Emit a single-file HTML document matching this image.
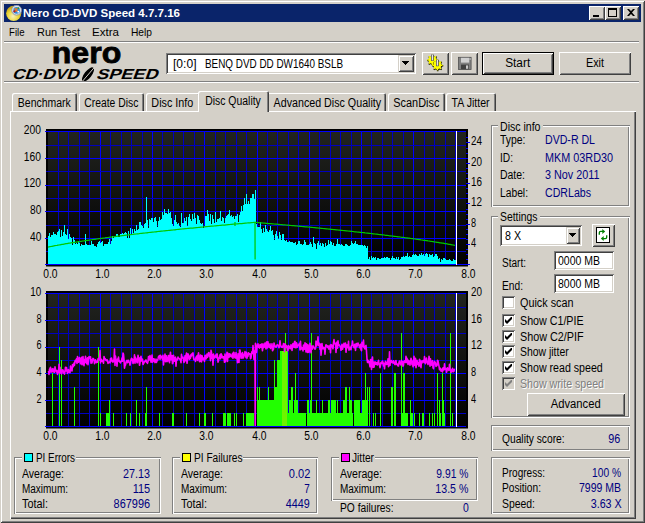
<!DOCTYPE html>
<html><head><meta charset="utf-8"><title>Nero CD-DVD Speed 4.7.7.16</title>
<style>
html,body{margin:0;padding:0;background:#d4d0c8;}
body{width:645px;height:523px;position:relative;overflow:hidden;font-family:"Liberation Sans",sans-serif;}
div,svg,span.t{position:absolute;}
span.t{white-space:pre;line-height:16px;}
</style></head><body>
<div style="left:0px;top:0px;width:645px;height:523px;background:#d4d0c8;box-shadow:inset 1px 1px 0 #d4d0c8, inset -1px -1px 0 #404040, inset 2px 2px 0 #fff, inset -2px -2px 0 #808080;"></div>
<div style="left:4px;top:4px;width:637px;height:18px;background:#0a246a"></div>
<svg style="left:6px;top:5px" width="16" height="16" viewBox="0 0 16 16">
<defs><radialGradient id="gd" cx="0.45" cy="0.7" r="0.6"><stop offset="0" stop-color="#f6f0c0"/><stop offset="0.6" stop-color="#ecd838"/><stop offset="1" stop-color="#c8a818"/></radialGradient></defs>
<circle cx="7.7" cy="8.3" r="7.6" fill="url(#gd)"/>
<circle cx="10.6" cy="5.2" r="4.9" fill="#dfe3ec" stroke="#8c94a8" stroke-width="0.9"/>
<circle cx="10.6" cy="5.4" r="3.3" fill="#2a8fe0"/>
<path d="M8.6 3.2L12 7M11.6 3L9 6.6" stroke="#f07820" stroke-width="1.3"/><circle cx="8.4" cy="6.4" r="1.1" fill="#c01818"/><circle cx="12.4" cy="3.2" r="0.9" fill="#28a038"/><circle cx="12.3" cy="6.7" r="0.9" fill="#fff"/>
</svg>
<span class="t" style="left:23.00px;top:5.02px;font-size:11.5px;font-weight:bold;color:#fff;transform:scaleX(1.0026);transform-origin:0 0">Nero CD-DVD Speed 4.7.7.16</span>
<div style="left:589px;top:6px;width:16px;height:14px;background:#d4d0c8;box-shadow:inset 1px 1px 0 #fff, inset -1px -1px 0 #404040, inset 2px 2px 0 #d4d0c8, inset -2px -2px 0 #808080;"><div style="left:4px;top:9px;width:6px;height:2px;background:#000"></div></div>
<div style="left:605px;top:6px;width:16px;height:14px;background:#d4d0c8;box-shadow:inset 1px 1px 0 #fff, inset -1px -1px 0 #404040, inset 2px 2px 0 #d4d0c8, inset -2px -2px 0 #808080;"><div style="left:3px;top:2px;width:9px;height:9px;box-sizing:border-box;border:1px solid #000;border-top-width:2px"></div></div>
<div style="left:623px;top:6px;width:16px;height:14px;background:#d4d0c8;box-shadow:inset 1px 1px 0 #fff, inset -1px -1px 0 #404040, inset 2px 2px 0 #d4d0c8, inset -2px -2px 0 #808080;"><svg style="left:4px;top:3px" width="8" height="7" viewBox="0 0 8 7"><path d="M0 0h2l2 2l2-2h2l-3 3.5l3 3.5h-2l-2-2l-2 2h-2l3-3.5z" fill="#000"/></svg></div>
<span class="t" style="left:9.00px;top:24.02px;font-size:11.5px;color:#000;transform:scaleX(0.8364);transform-origin:0 0">File</span>
<span class="t" style="left:37.00px;top:24.02px;font-size:11.5px;color:#000;transform:scaleX(0.9516);transform-origin:0 0">Run Test</span>
<span class="t" style="left:92.00px;top:24.02px;font-size:11.5px;color:#000;transform:scaleX(1.0058);transform-origin:0 0">Extra</span>
<span class="t" style="left:131.00px;top:24.02px;font-size:11.5px;color:#000;transform:scaleX(0.8877);transform-origin:0 0">Help</span>
<div style="left:4px;top:41px;width:635px;height:1px;background:#808080"></div><div style="left:4px;top:42px;width:635px;height:1px;background:#fff"></div>
<svg style="left:10px;top:43px" width="152" height="40" viewBox="0 0 152 40">
<text x="76.5" y="19.8" text-anchor="middle" font-family="Liberation Sans" font-weight="bold" font-size="30" textLength="69.5" lengthAdjust="spacingAndGlyphs" fill="#000" stroke="#000" stroke-width="0.8">nero</text>
<g transform="skewX(-20)"><text x="15" y="36.3" font-family="Liberation Sans" font-weight="bold" font-size="14.5" textLength="66.5" lengthAdjust="spacingAndGlyphs" fill="#000">CD·DVD</text>
<text x="99" y="36.3" font-family="Liberation Sans" font-weight="bold" font-size="14.5" textLength="61.5" lengthAdjust="spacingAndGlyphs" fill="#000">SPEED</text></g>
<ellipse cx="78" cy="31.5" rx="3.6" ry="8.6" transform="rotate(38 78 31.5)" fill="#000"/>
<path d="M72 38.8L84 24.8" stroke="#d4d0c8" stroke-width="1"/>
</svg>
<div style="left:166px;top:53px;width:250px;height:21px;background:#fff;box-shadow:inset 1px 1px 0 #808080, inset -1px -1px 0 #fff, inset 2px 2px 0 #404040, inset -2px -2px 0 #d4d0c8;"></div>
<span class="t" style="left:172.60px;top:56.00px;font-size:12px;color:#000;transform:scaleX(1.0060);transform-origin:0 0">[0:0]</span>
<span class="t" style="left:205.00px;top:56.00px;font-size:12px;color:#000;transform:scaleX(0.8244);transform-origin:0 0">BENQ DVD DD DW1640 BSLB</span>
<div style="left:398px;top:55px;width:16px;height:17px;background:#d4d0c8;box-shadow:inset 1px 1px 0 #d4d0c8, inset -1px -1px 0 #404040, inset 2px 2px 0 #fff, inset -2px -2px 0 #808080;"><svg style="left:4px;top:6px" width="7" height="4" viewBox="0 0 7 4" shape-rendering="crispEdges"><path d="M0 0h7l-3.5 4z" fill="#000"/></svg></div>
<div style="left:422px;top:52px;width:27px;height:23px;background:#d4d0c8;box-shadow:inset 1px 1px 0 #fff, inset -1px -1px 0 #404040, inset 2px 2px 0 #d4d0c8, inset -2px -2px 0 #808080;"><svg style="left:0;top:0" width="27" height="23" viewBox="0 0 27 23"><g transform="translate(10.4 7.9)"><path d="M3.90 -0.87 L5.55 -0.75 L5.55 0.75 L3.90 0.87 L3.38 2.14 L4.45 3.40 L3.40 4.45 L2.14 3.38 L0.87 3.90 L0.75 5.55 L-0.75 5.55 L-0.87 3.90 L-2.14 3.38 L-3.40 4.45 L-4.45 3.40 L-3.38 2.14 L-3.90 0.87 L-5.55 0.75 L-5.55 -0.75 L-3.90 -0.87 L-3.38 -2.14 L-4.45 -3.40 L-3.40 -4.45 L-2.14 -3.38 L-0.87 -3.90 L-0.75 -5.55 L0.75 -5.55 L0.87 -3.90 L2.14 -3.38 L3.40 -4.45 L4.45 -3.40 L3.38 -2.14Z" fill="#202000" transform="translate(0.3 0.6)"/><circle cx="0.3" cy="0.6" r="4.3" fill="#202000"/>
<path d="M3.32 -0.74 L5.05 -0.68 L5.05 0.68 L3.32 0.74 L2.87 1.82 L4.05 3.09 L3.09 4.05 L1.82 2.87 L0.74 3.32 L0.68 5.05 L-0.68 5.05 L-0.74 3.32 L-1.82 2.87 L-3.09 4.05 L-4.05 3.09 L-2.87 1.82 L-3.32 0.74 L-5.05 0.68 L-5.05 -0.68 L-3.32 -0.74 L-2.87 -1.82 L-4.05 -3.09 L-3.09 -4.05 L-1.82 -2.87 L-0.74 -3.32 L-0.68 -5.05 L0.68 -5.05 L0.74 -3.32 L1.82 -2.87 L3.09 -4.05 L4.05 -3.09 L2.87 -1.82Z" fill="#ffff00"/><circle r="3.7" fill="#ffff00"/>
<rect x="-1.4" y="-5.4" width="2.8" height="6.4" fill="#585858"/><rect x="-0.6" y="-5.2" width="1.2" height="5.6" fill="#e8e8e8"/></g><g transform="translate(15.4 13.2)"><path d="M3.90 -0.87 L5.55 -0.75 L5.55 0.75 L3.90 0.87 L3.38 2.14 L4.45 3.40 L3.40 4.45 L2.14 3.38 L0.87 3.90 L0.75 5.55 L-0.75 5.55 L-0.87 3.90 L-2.14 3.38 L-3.40 4.45 L-4.45 3.40 L-3.38 2.14 L-3.90 0.87 L-5.55 0.75 L-5.55 -0.75 L-3.90 -0.87 L-3.38 -2.14 L-4.45 -3.40 L-3.40 -4.45 L-2.14 -3.38 L-0.87 -3.90 L-0.75 -5.55 L0.75 -5.55 L0.87 -3.90 L2.14 -3.38 L3.40 -4.45 L4.45 -3.40 L3.38 -2.14Z" fill="#202000" transform="translate(0.3 0.6)"/><circle cx="0.3" cy="0.6" r="4.3" fill="#202000"/>
<path d="M3.32 -0.74 L5.05 -0.68 L5.05 0.68 L3.32 0.74 L2.87 1.82 L4.05 3.09 L3.09 4.05 L1.82 2.87 L0.74 3.32 L0.68 5.05 L-0.68 5.05 L-0.74 3.32 L-1.82 2.87 L-3.09 4.05 L-4.05 3.09 L-2.87 1.82 L-3.32 0.74 L-5.05 0.68 L-5.05 -0.68 L-3.32 -0.74 L-2.87 -1.82 L-4.05 -3.09 L-3.09 -4.05 L-1.82 -2.87 L-0.74 -3.32 L-0.68 -5.05 L0.68 -5.05 L0.74 -3.32 L1.82 -2.87 L3.09 -4.05 L4.05 -3.09 L2.87 -1.82Z" fill="#ffff00"/><circle r="3.7" fill="#ffff00"/>
<rect x="-1.4" y="-5.4" width="2.8" height="6.4" fill="#585858"/><rect x="-0.6" y="-5.2" width="1.2" height="5.6" fill="#e8e8e8"/></g></svg></div>
<div style="left:451px;top:52px;width:27px;height:23px;background:#d4d0c8;box-shadow:inset 1px 1px 0 #fff, inset -1px -1px 0 #404040, inset 2px 2px 0 #d4d0c8, inset -2px -2px 0 #808080;"><svg style="left:0;top:0" width="27" height="23" viewBox="0 0 27 23">
<rect x="7.5" y="5.3" width="12.6" height="12.2" fill="#808080"/><rect x="7.5" y="5.3" width="12.6" height="12.2" fill="none" stroke="#505050" stroke-width="0.8"/>
<rect x="10" y="5.8" width="8.2" height="4.8" fill="#d0d0d0"/><rect x="10" y="12.6" width="8" height="4.6" fill="#404040"/><rect x="15" y="13.4" width="2.2" height="3.4" fill="#c8c8c8"/><rect x="18.6" y="6.2" width="1" height="1.6" fill="#d0d0d0"/></svg></div>
<div style="left:482px;top:52px;width:72px;height:23px;background:#000"></div>
<div style="left:483px;top:53px;width:70px;height:21px;background:#d4d0c8;box-shadow:inset 1px 1px 0 #fff, inset -1px -1px 0 #404040, inset 2px 2px 0 #d4d0c8, inset -2px -2px 0 #808080;"></div>
<span class="t" style="left:505.33px;top:55.00px;font-size:12px;color:#000;transform:scaleX(0.9864);transform-origin:50% 0">Start</span>
<div style="left:559px;top:52px;width:72px;height:23px;background:#d4d0c8;box-shadow:inset 1px 1px 0 #fff, inset -1px -1px 0 #404040, inset 2px 2px 0 #d4d0c8, inset -2px -2px 0 #808080;"></div>
<span class="t" style="left:584.99px;top:55.00px;font-size:12px;color:#000;transform:scaleX(0.8993);transform-origin:50% 0">Exit</span>
<div style="left:4px;top:81px;width:635px;height:1px;background:#808080"></div><div style="left:4px;top:82px;width:635px;height:1px;background:#fff"></div>
<div style="left:10px;top:111px;width:626px;height:408px;background:#d4d0c8;box-shadow:inset 1px 1px 0 #fff, inset -1px -1px 0 #404040, inset -2px -2px 0 #808080;"></div>
<div style="left:12px;top:93px;width:65px;height:18px;background:#d4d0c8;border-radius:2px 2px 0 0;box-shadow:inset 1px 1px 0 #fff, inset -1px 0 0 #404040, inset -2px 0 0 #808080;"></div>
<span class="t" style="left:14.15px;top:95.00px;font-size:12px;color:#000;transform:scaleX(0.8731);transform-origin:50% 0">Benchmark</span>
<div style="left:79px;top:93px;width:65px;height:18px;background:#d4d0c8;border-radius:2px 2px 0 0;box-shadow:inset 1px 1px 0 #fff, inset -1px 0 0 #404040, inset -2px 0 0 #808080;"></div>
<span class="t" style="left:80.16px;top:95.00px;font-size:12px;color:#000;transform:scaleX(0.8614);transform-origin:50% 0">Create Disc</span>
<div style="left:146px;top:93px;width:54px;height:18px;background:#d4d0c8;border-radius:2px 2px 0 0;box-shadow:inset 1px 1px 0 #fff, inset -1px 0 0 #404040, inset -2px 0 0 #808080;"></div>
<span class="t" style="left:148.96px;top:95.00px;font-size:12px;color:#000;transform:scaleX(0.8996);transform-origin:50% 0">Disc Info</span>
<div style="left:267px;top:93px;width:119px;height:18px;background:#d4d0c8;border-radius:2px 2px 0 0;box-shadow:inset 1px 1px 0 #fff, inset -1px 0 0 #404040, inset -2px 0 0 #808080;"></div>
<span class="t" style="left:266.63px;top:95.00px;font-size:12px;color:#000;transform:scaleX(0.8912);transform-origin:50% 0">Advanced Disc Quality</span>
<div style="left:388px;top:93px;width:57px;height:18px;background:#d4d0c8;border-radius:2px 2px 0 0;box-shadow:inset 1px 1px 0 #fff, inset -1px 0 0 #404040, inset -2px 0 0 #808080;"></div>
<span class="t" style="left:390.96px;top:95.00px;font-size:12px;color:#000;transform:scaleX(0.9075);transform-origin:50% 0">ScanDisc</span>
<div style="left:446px;top:93px;width:50px;height:18px;background:#d4d0c8;border-radius:2px 2px 0 0;box-shadow:inset 1px 1px 0 #fff, inset -1px 0 0 #404040, inset -2px 0 0 #808080;"></div>
<span class="t" style="left:449.24px;top:95.00px;font-size:12px;color:#000;transform:scaleX(0.8812);transform-origin:50% 0">TA Jitter</span>
<div style="left:198px;top:91px;width:71px;height:21px;background:#d4d0c8;border-radius:2px 2px 0 0;box-shadow:inset 1px 1px 0 #fff, inset -1px 0 0 #404040, inset -2px 0 0 #808080;"></div>
<span class="t" style="left:201.39px;top:93.00px;font-size:12px;color:#000;transform:scaleX(0.8685);transform-origin:50% 0">Disc Quality</span>
<svg style="left:0;top:0" width="490" height="450" viewBox="0 0 490 450">
<rect x="46" y="129.0" width="422" height="137.5" fill="#000"/>
<rect x="48" y="131.3" width="418" height="133.2" fill="url(#gr131)"/>
<defs><linearGradient id="gr131" x1="0" y1="0" x2="0" y2="1"><stop offset="0" stop-color="#22241f"/><stop offset="1" stop-color="#000"/></linearGradient></defs>
<g shape-rendering="crispEdges">
<line x1="58.50" y1="131.3" x2="58.50" y2="264.5" stroke="#0000c0" stroke-width="1"/>
<line x1="68.50" y1="131.3" x2="68.50" y2="264.5" stroke="#0000c0" stroke-width="1"/>
<line x1="79.50" y1="131.3" x2="79.50" y2="264.5" stroke="#0000c0" stroke-width="1"/>
<line x1="89.50" y1="131.3" x2="89.50" y2="264.5" stroke="#0000c0" stroke-width="1"/>
<line x1="100.50" y1="131.3" x2="100.50" y2="264.5" stroke="#0000ff" stroke-width="1"/>
<line x1="110.50" y1="131.3" x2="110.50" y2="264.5" stroke="#0000c0" stroke-width="1"/>
<line x1="121.50" y1="131.3" x2="121.50" y2="264.5" stroke="#0000c0" stroke-width="1"/>
<line x1="131.50" y1="131.3" x2="131.50" y2="264.5" stroke="#0000c0" stroke-width="1"/>
<line x1="142.50" y1="131.3" x2="142.50" y2="264.5" stroke="#0000c0" stroke-width="1"/>
<line x1="152.50" y1="131.3" x2="152.50" y2="264.5" stroke="#0000ff" stroke-width="1"/>
<line x1="162.50" y1="131.3" x2="162.50" y2="264.5" stroke="#0000c0" stroke-width="1"/>
<line x1="173.50" y1="131.3" x2="173.50" y2="264.5" stroke="#0000c0" stroke-width="1"/>
<line x1="183.50" y1="131.3" x2="183.50" y2="264.5" stroke="#0000c0" stroke-width="1"/>
<line x1="194.50" y1="131.3" x2="194.50" y2="264.5" stroke="#0000c0" stroke-width="1"/>
<line x1="204.50" y1="131.3" x2="204.50" y2="264.5" stroke="#0000ff" stroke-width="1"/>
<line x1="215.50" y1="131.3" x2="215.50" y2="264.5" stroke="#0000c0" stroke-width="1"/>
<line x1="225.50" y1="131.3" x2="225.50" y2="264.5" stroke="#0000c0" stroke-width="1"/>
<line x1="236.50" y1="131.3" x2="236.50" y2="264.5" stroke="#0000c0" stroke-width="1"/>
<line x1="246.50" y1="131.3" x2="246.50" y2="264.5" stroke="#0000c0" stroke-width="1"/>
<line x1="257.50" y1="131.3" x2="257.50" y2="264.5" stroke="#0000ff" stroke-width="1"/>
<line x1="267.50" y1="131.3" x2="267.50" y2="264.5" stroke="#0000c0" stroke-width="1"/>
<line x1="277.50" y1="131.3" x2="277.50" y2="264.5" stroke="#0000c0" stroke-width="1"/>
<line x1="288.50" y1="131.3" x2="288.50" y2="264.5" stroke="#0000c0" stroke-width="1"/>
<line x1="298.50" y1="131.3" x2="298.50" y2="264.5" stroke="#0000c0" stroke-width="1"/>
<line x1="309.50" y1="131.3" x2="309.50" y2="264.5" stroke="#0000ff" stroke-width="1"/>
<line x1="319.50" y1="131.3" x2="319.50" y2="264.5" stroke="#0000c0" stroke-width="1"/>
<line x1="330.50" y1="131.3" x2="330.50" y2="264.5" stroke="#0000c0" stroke-width="1"/>
<line x1="340.50" y1="131.3" x2="340.50" y2="264.5" stroke="#0000c0" stroke-width="1"/>
<line x1="351.50" y1="131.3" x2="351.50" y2="264.5" stroke="#0000c0" stroke-width="1"/>
<line x1="361.50" y1="131.3" x2="361.50" y2="264.5" stroke="#0000ff" stroke-width="1"/>
<line x1="371.50" y1="131.3" x2="371.50" y2="264.5" stroke="#0000c0" stroke-width="1"/>
<line x1="382.50" y1="131.3" x2="382.50" y2="264.5" stroke="#0000c0" stroke-width="1"/>
<line x1="392.50" y1="131.3" x2="392.50" y2="264.5" stroke="#0000c0" stroke-width="1"/>
<line x1="403.50" y1="131.3" x2="403.50" y2="264.5" stroke="#0000c0" stroke-width="1"/>
<line x1="413.50" y1="131.3" x2="413.50" y2="264.5" stroke="#0000ff" stroke-width="1"/>
<line x1="424.50" y1="131.3" x2="424.50" y2="264.5" stroke="#0000c0" stroke-width="1"/>
<line x1="434.50" y1="131.3" x2="434.50" y2="264.5" stroke="#0000c0" stroke-width="1"/>
<line x1="445.50" y1="131.3" x2="445.50" y2="264.5" stroke="#0000c0" stroke-width="1"/>
<line x1="455.50" y1="131.3" x2="455.50" y2="264.5" stroke="#0000c0" stroke-width="1"/>
<line x1="44.5" y1="131.50" x2="466" y2="131.50" stroke="#0000ff" stroke-width="1"/>
<line x1="46" y1="145.50" x2="466" y2="145.50" stroke="#0000c0" stroke-width="1"/>
<line x1="44.5" y1="158.50" x2="466" y2="158.50" stroke="#0000ff" stroke-width="1"/>
<line x1="46" y1="171.50" x2="466" y2="171.50" stroke="#0000c0" stroke-width="1"/>
<line x1="44.5" y1="185.50" x2="466" y2="185.50" stroke="#0000ff" stroke-width="1"/>
<line x1="46" y1="198.50" x2="466" y2="198.50" stroke="#0000c0" stroke-width="1"/>
<line x1="44.5" y1="211.50" x2="466" y2="211.50" stroke="#0000ff" stroke-width="1"/>
<line x1="46" y1="225.50" x2="466" y2="225.50" stroke="#0000c0" stroke-width="1"/>
<line x1="44.5" y1="238.50" x2="466" y2="238.50" stroke="#0000ff" stroke-width="1"/>
<line x1="46" y1="251.50" x2="466" y2="251.50" stroke="#0000c0" stroke-width="1"/>
<line x1="44.5" y1="264.50" x2="466" y2="264.50" stroke="#0000ff" stroke-width="1"/>
</g>
<path d="M48 264.5 V236 H49 V233 H50 V237 H51 V235 H52 V235 H53 V232 H54 V234 H55 V234 H56 V235 H57 V232 H58 V231 H59 V229 H60 V237 H61 V230 H62 V236 H63 V232 H64 V225 H65 V234 H66 V235 H67 V229 H68 V239 H69 V234 H70 V237 H71 V238 H72 V245 H73 V237 H74 V240 H75 V244 H76 V243 H77 V244 H78 V241 H79 V243 H80 V246 H81 V244 H82 V245 H83 V245 H84 V245 H85 V234 H86 V244 H87 V245 H88 V245 H89 V245 H90 V245 H91 V241 H92 V244 H93 V244 H94 V246 H95 V246 H96 V247 H97 V244 H98 V242 H99 V241 H100 V243 H101 V242 H102 V241 H103 V246 H104 V244 H105 V244 H106 V244 H107 V244 H108 V242 H109 V239 H110 V244 H111 V241 H112 V236 H113 V238 H114 V236 H115 V236 H116 V234 H117 V234 H118 V237 H119 V237 H120 V234 H121 V234 H122 V233 H123 V234 H124 V233 H125 V232 H126 V233 H127 V238 H128 V231 H129 V238 H130 V228 H131 V235 H132 V229 H133 V233 H134 V229 H135 V231 H136 V225 H137 V230 H138 V229 H139 V222 H140 V222 H141 V225 H142 V226 H143 V228 H144 V224 H145 V223 H146 V197 H147 V220 H148 V228 H149 V219 H150 V220 H151 V218 H152 V218 H153 V222 H154 V218 H155 V217 H156 V221 H157 V227 H158 V221 H159 V217 H160 V220 H161 V219 H162 V212 H163 V215 H164 V209 H165 V213 H166 V213 H167 V214 H168 V209 H169 V213 H170 V212 H171 V218 H172 V224 H173 V226 H174 V220 H175 V215 H176 V222 H177 V224 H178 V223 H179 V226 H180 V227 H181 V213 H182 V223 H183 V223 H184 V218 H185 V221 H186 V217 H187 V226 H188 V217 H189 V214 H190 V219 H191 V221 H192 V214 H193 V219 H194 V213 H195 V218 H196 V224 H197 V215 H198 V216 H199 V220 H200 V223 H201 V224 H202 V223 H203 V228 H204 V226 H205 V216 H206 V216 H207 V210 H208 V214 H209 V221 H210 V214 H211 V224 H212 V215 H213 V219 H214 V223 H215 V212 H216 V222 H217 V219 H218 V219 H219 V218 H220 V211 H221 V221 H222 V217 H223 V218 H224 V223 H225 V218 H226 V216 H227 V215 H228 V214 H229 V210 H230 V216 H231 V215 H232 V217 H233 V216 H234 V219 H235 V216 H236 V216 H237 V214 H238 V222 H239 V215 H240 V212 H241 V206 H242 V211 H243 V205 H244 V198 H245 V204 H246 V194 H247 V204 H248 V201 H249 V204 H250 V198 H251 V198 H252 V194 H253 V194 H254 V199 H255 V190 H256 V224 H257 V227 H258 V227 H259 V227 H260 V222 H261 V229 H262 V233 H263 V228 H264 V232 H265 V225 H266 V229 H267 V231 H268 V232 H269 V230 H270 V226 H271 V231 H272 V230 H273 V235 H274 V240 H275 V234 H276 V231 H277 V236 H278 V239 H279 V232 H280 V235 H281 V240 H282 V234 H283 V234 H284 V240 H285 V241 H286 V240 H287 V242 H288 V242 H289 V241 H290 V242 H291 V242 H292 V242 H293 V243 H294 V243 H295 V242 H296 V245 H297 V244 H298 V241 H299 V241 H300 V244 H301 V244 H302 V245 H303 V244 H304 V240 H305 V242 H306 V245 H307 V245 H308 V245 H309 V244 H310 V242 H311 V244 H312 V247 H313 V237 H314 V243 H315 V244 H316 V249 H317 V243 H318 V241 H319 V245 H320 V243 H321 V246 H322 V243 H323 V244 H324 V247 H325 V243 H326 V246 H327 V245 H328 V240 H329 V244 H330 V241 H331 V242 H332 V245 H333 V243 H334 V246 H335 V246 H336 V244 H337 V239 H338 V244 H339 V244 H340 V245 H341 V244 H342 V245 H343 V246 H344 V246 H345 V244 H346 V244 H347 V245 H348 V246 H349 V246 H350 V245 H351 V241 H352 V243 H353 V244 H354 V243 H355 V241 H356 V244 H357 V244 H358 V245 H359 V245 H360 V245 H361 V245 H362 V245 H363 V246 H364 V245 H365 V246 H366 V248 H367 V246 H368 V259 H369 V257 H370 V260 H371 V256 H372 V258 H373 V257 H374 V258 H375 V257 H376 V260 H377 V258 H378 V258 H379 V259 H380 V259 H381 V258 H382 V258 H383 V258 H384 V257 H385 V258 H386 V257 H387 V257 H388 V258 H389 V258 H390 V260 H391 V258 H392 V256 H393 V258 H394 V258 H395 V259 H396 V257 H397 V259 H398 V257 H399 V260 H400 V259 H401 V257 H402 V257 H403 V256 H404 V257 H405 V256 H406 V256 H407 V253 H408 V257 H409 V256 H410 V257 H411 V257 H412 V255 H413 V254 H414 V255 H415 V254 H416 V255 H417 V256 H418 V256 H419 V254 H420 V255 H421 V253 H422 V255 H423 V254 H424 V256 H425 V254 H426 V253 H427 V254 H428 V257 H429 V254 H430 V255 H431 V255 H432 V254 H433 V257 H434 V256 H435 V254 H436 V254 H437 V256 H438 V259 H439 V258 H440 V262 H441 V259 H442 V260 H443 V258 H444 V258 H445 V259 H446 V260 H447 V260 H448 V260 H449 V259 H450 V260 H451 V261 H452 V261 H453 V259 H454 V260 H455 V260 H456 V264.5 Z" fill="#00ffff" shape-rendering="crispEdges"/><path d="M48.0 247.1 L49.0 246.9 L50.0 246.7 L51.0 246.5 L52.0 246.3 L53.0 246.1 L54.0 245.9 L55.0 245.7 L56.0 245.5 L57.0 245.4 L58.0 245.2 L59.0 245.0 L60.0 244.8 L61.0 244.6 L62.0 244.4 L63.0 244.3 L64.0 244.1 L65.0 243.9 L66.0 243.7 L67.0 243.6 L68.0 243.4 L69.0 243.2 L70.0 243.1 L71.0 242.9 L72.0 242.7 L73.0 242.6 L74.0 242.4 L75.0 242.3 L76.0 242.1 L77.0 241.9 L78.0 241.8 L79.0 241.6 L80.0 241.5 L81.0 241.3 L82.0 241.2 L83.0 241.0 L84.0 240.9 L85.0 240.7 L86.0 240.6 L87.0 240.4 L88.0 240.3 L89.0 240.1 L90.0 240.0 L91.0 239.8 L92.0 239.7 L93.0 239.5 L94.0 239.4 L95.0 239.3 L96.0 239.1 L97.0 239.0 L98.0 238.8 L99.0 238.7 L100.0 238.6 L101.0 238.4 L102.0 238.3 L103.0 238.1 L104.0 238.0 L105.0 237.9 L106.0 237.7 L107.0 237.6 L108.0 237.5 L109.0 237.3 L110.0 237.2 L111.0 237.1 L112.0 237.0 L113.0 236.8 L114.0 236.7 L115.0 236.6 L116.0 236.4 L117.0 236.3 L118.0 236.2 L119.0 236.1 L120.0 235.9 L121.0 235.8 L122.0 235.7 L123.0 235.6 L124.0 235.4 L125.0 235.3 L126.0 235.2 L127.0 235.1 L128.0 235.0 L129.0 234.8 L130.0 234.7 L131.0 234.6 L132.0 234.5 L133.0 234.4 L134.0 234.2 L135.0 234.1 L136.0 234.0 L137.0 233.9 L138.0 233.8 L139.0 233.7 L140.0 233.5 L141.0 233.4 L142.0 233.3 L143.0 233.2 L144.0 233.1 L145.0 233.0 L146.0 232.9 L147.0 232.8 L148.0 232.6 L149.0 232.5 L150.0 232.4 L151.0 232.3 L152.0 232.2 L153.0 232.1 L154.0 232.0 L155.0 231.9 L156.0 231.8 L157.0 231.6 L158.0 231.5 L159.0 231.4 L160.0 231.3 L161.0 231.2 L162.0 231.1 L163.0 231.0 L164.0 230.9 L165.0 230.8 L166.0 230.7 L167.0 230.6 L168.0 230.5 L169.0 230.4 L170.0 230.3 L171.0 230.2 L172.0 230.1 L173.0 230.0 L174.0 229.9 L175.0 229.8 L176.0 229.6 L177.0 229.5 L178.0 229.4 L179.0 229.3 L180.0 229.2 L181.0 229.1 L182.0 229.0 L183.0 228.9 L184.0 228.8 L185.0 228.7 L186.0 228.6 L187.0 228.5 L188.0 228.4 L189.0 228.3 L190.0 228.2 L191.0 228.1 L192.0 228.0 L193.0 228.0 L194.0 227.9 L195.0 227.8 L196.0 227.7 L197.0 227.6 L198.0 227.5 L199.0 227.4 L200.0 227.3 L201.0 227.2 L202.0 227.1 L203.0 227.0 L204.0 226.9 L205.0 226.8 L206.0 226.7 L207.0 226.6 L208.0 226.5 L209.0 226.4 L210.0 226.3 L211.0 226.2 L212.0 226.1 L213.0 226.1 L214.0 226.0 L215.0 225.9 L216.0 225.8 L217.0 225.7 L218.0 225.6 L219.0 225.5 L220.0 225.4 L221.0 225.3 L222.0 225.2 L223.0 225.1 L224.0 225.0 L225.0 225.0 L226.0 224.9 L227.0 224.8 L228.0 224.7 L229.0 224.6 L230.0 224.5 L231.0 224.4 L232.0 224.3 L233.0 224.2 L234.0 224.2 L235.0 224.1 L236.0 224.0 L237.0 223.9 L238.0 223.8 L239.0 223.7 L240.0 223.6 L241.0 223.5 L242.0 223.5 L243.0 223.4 L244.0 223.3 L245.0 223.2 L246.0 223.1 L247.0 223.0 L248.0 222.9 L249.0 222.8 L250.0 222.8 L251.0 222.7 L252.0 222.6 L253.0 222.5 L254.0 222.4 L255.0 222.4 L255.1 259.4 M255.1 222.3 L256.0 222.4 L257.0 222.5 L258.0 222.6 L259.0 222.7 L260.0 222.8 L261.0 222.9 L262.0 222.9 L263.0 223.0 L264.0 223.1 L265.0 223.2 L266.0 223.3 L267.0 223.4 L268.0 223.5 L269.0 223.5 L270.0 223.6 L271.0 223.7 L272.0 223.8 L273.0 223.9 L274.0 224.0 L275.0 224.1 L276.0 224.1 L277.0 224.2 L278.0 224.3 L279.0 224.4 L280.0 224.5 L281.0 224.6 L282.0 224.7 L283.0 224.8 L284.0 224.9 L285.0 224.9 L286.0 225.0 L287.0 225.1 L288.0 225.2 L289.0 225.3 L290.0 225.4 L291.0 225.5 L292.0 225.6 L293.0 225.7 L294.0 225.7 L295.0 225.8 L296.0 225.9 L297.0 226.0 L298.0 226.1 L299.0 226.2 L300.0 226.3 L301.0 226.4 L302.0 226.5 L303.0 226.6 L304.0 226.7 L305.0 226.8 L306.0 226.9 L307.0 226.9 L308.0 227.0 L309.0 227.1 L310.0 227.2 L311.0 227.3 L312.0 227.4 L313.0 227.5 L314.0 227.6 L315.0 227.7 L316.0 227.8 L317.0 227.9 L318.0 228.0 L319.0 228.1 L320.0 228.2 L321.0 228.3 L322.0 228.4 L323.0 228.5 L324.0 228.6 L325.0 228.7 L326.0 228.8 L327.0 228.9 L328.0 229.0 L329.0 229.1 L330.0 229.2 L331.0 229.3 L332.0 229.4 L333.0 229.5 L334.0 229.6 L335.0 229.7 L336.0 229.8 L337.0 229.9 L338.0 230.0 L339.0 230.1 L340.0 230.2 L341.0 230.3 L342.0 230.4 L343.0 230.5 L344.0 230.6 L345.0 230.7 L346.0 230.8 L347.0 230.9 L348.0 231.0 L349.0 231.1 L350.0 231.2 L351.0 231.3 L352.0 231.4 L353.0 231.5 L354.0 231.7 L355.0 231.8 L356.0 231.9 L357.0 232.0 L358.0 232.1 L359.0 232.2 L360.0 232.3 L361.0 232.4 L362.0 232.5 L363.0 232.6 L364.0 232.7 L365.0 232.9 L366.0 233.0 L367.0 233.1 L368.0 233.2 L369.0 233.3 L370.0 233.4 L371.0 233.5 L372.0 233.6 L373.0 233.8 L374.0 233.9 L375.0 234.0 L376.0 234.1 L377.0 234.2 L378.0 234.3 L379.0 234.5 L380.0 234.6 L381.0 234.7 L382.0 234.8 L383.0 234.9 L384.0 235.0 L385.0 235.2 L386.0 235.3 L387.0 235.4 L388.0 235.5 L389.0 235.7 L390.0 235.8 L391.0 235.9 L392.0 236.0 L393.0 236.1 L394.0 236.3 L395.0 236.4 L396.0 236.5 L397.0 236.6 L398.0 236.8 L399.0 236.9 L400.0 237.0 L401.0 237.2 L402.0 237.3 L403.0 237.4 L404.0 237.5 L405.0 237.7 L406.0 237.8 L407.0 237.9 L408.0 238.1 L409.0 238.2 L410.0 238.3 L411.0 238.5 L412.0 238.6 L413.0 238.7 L414.0 238.9 L415.0 239.0 L416.0 239.2 L417.0 239.3 L418.0 239.4 L419.0 239.6 L420.0 239.7 L421.0 239.9 L422.0 240.0 L423.0 240.2 L424.0 240.3 L425.0 240.4 L426.0 240.6 L427.0 240.7 L428.0 240.9 L429.0 241.0 L430.0 241.2 L431.0 241.3 L432.0 241.5 L433.0 241.6 L434.0 241.8 L435.0 242.0 L436.0 242.1 L437.0 242.3 L438.0 242.4 L439.0 242.6 L440.0 242.8 L441.0 242.9 L442.0 243.1 L443.0 243.2 L444.0 243.4 L445.0 243.6 L446.0 243.7 L447.0 243.9 L448.0 244.1 L449.0 244.3 L450.0 244.4 L451.0 244.6 L452.0 244.8 L453.0 245.0 L454.0 245.2 L455.0 245.3 M235 222.1 L235 226.1" fill="none" stroke="#00c800" stroke-width="1.25"/>
<line x1="44.5" y1="264.5" x2="466" y2="264.5" stroke="#0000ff" stroke-width="1" shape-rendering="crispEdges"/>
<line x1="466" y1="264.50" x2="470" y2="264.50" stroke="#0000ff" stroke-width="1" shape-rendering="crispEdges"/>
<line x1="466" y1="259.50" x2="467.6" y2="259.50" stroke="#0000ff" stroke-width="1" shape-rendering="crispEdges"/>
<line x1="466" y1="254.50" x2="467.6" y2="254.50" stroke="#0000ff" stroke-width="1" shape-rendering="crispEdges"/>
<line x1="466" y1="249.50" x2="467.6" y2="249.50" stroke="#0000ff" stroke-width="1" shape-rendering="crispEdges"/>
<line x1="466" y1="244.50" x2="470" y2="244.50" stroke="#0000ff" stroke-width="1" shape-rendering="crispEdges"/>
<line x1="466" y1="239.50" x2="467.6" y2="239.50" stroke="#0000ff" stroke-width="1" shape-rendering="crispEdges"/>
<line x1="466" y1="234.50" x2="467.6" y2="234.50" stroke="#0000ff" stroke-width="1" shape-rendering="crispEdges"/>
<line x1="466" y1="229.50" x2="467.6" y2="229.50" stroke="#0000ff" stroke-width="1" shape-rendering="crispEdges"/>
<line x1="466" y1="224.50" x2="470" y2="224.50" stroke="#0000ff" stroke-width="1" shape-rendering="crispEdges"/>
<line x1="466" y1="219.50" x2="467.6" y2="219.50" stroke="#0000ff" stroke-width="1" shape-rendering="crispEdges"/>
<line x1="466" y1="214.50" x2="467.6" y2="214.50" stroke="#0000ff" stroke-width="1" shape-rendering="crispEdges"/>
<line x1="466" y1="209.50" x2="467.6" y2="209.50" stroke="#0000ff" stroke-width="1" shape-rendering="crispEdges"/>
<line x1="466" y1="203.50" x2="470" y2="203.50" stroke="#0000ff" stroke-width="1" shape-rendering="crispEdges"/>
<line x1="466" y1="198.50" x2="467.6" y2="198.50" stroke="#0000ff" stroke-width="1" shape-rendering="crispEdges"/>
<line x1="466" y1="193.50" x2="467.6" y2="193.50" stroke="#0000ff" stroke-width="1" shape-rendering="crispEdges"/>
<line x1="466" y1="188.50" x2="467.6" y2="188.50" stroke="#0000ff" stroke-width="1" shape-rendering="crispEdges"/>
<line x1="466" y1="183.50" x2="470" y2="183.50" stroke="#0000ff" stroke-width="1" shape-rendering="crispEdges"/>
<line x1="466" y1="178.50" x2="467.6" y2="178.50" stroke="#0000ff" stroke-width="1" shape-rendering="crispEdges"/>
<line x1="466" y1="173.50" x2="467.6" y2="173.50" stroke="#0000ff" stroke-width="1" shape-rendering="crispEdges"/>
<line x1="466" y1="168.50" x2="467.6" y2="168.50" stroke="#0000ff" stroke-width="1" shape-rendering="crispEdges"/>
<line x1="466" y1="163.50" x2="470" y2="163.50" stroke="#0000ff" stroke-width="1" shape-rendering="crispEdges"/>
<line x1="466" y1="158.50" x2="467.6" y2="158.50" stroke="#0000ff" stroke-width="1" shape-rendering="crispEdges"/>
<line x1="466" y1="153.50" x2="467.6" y2="153.50" stroke="#0000ff" stroke-width="1" shape-rendering="crispEdges"/>
<line x1="466" y1="148.50" x2="467.6" y2="148.50" stroke="#0000ff" stroke-width="1" shape-rendering="crispEdges"/>
<line x1="466" y1="142.50" x2="470" y2="142.50" stroke="#0000ff" stroke-width="1" shape-rendering="crispEdges"/>
<line x1="466" y1="137.50" x2="467.6" y2="137.50" stroke="#0000ff" stroke-width="1" shape-rendering="crispEdges"/>
<line x1="456.5" y1="131.3" x2="456.5" y2="264.5" stroke="#ffffff" stroke-width="1" shape-rendering="crispEdges"/>
<rect x="46" y="291.0" width="422" height="137.5" fill="#000"/>
<rect x="48" y="293.3" width="418" height="133.2" fill="url(#gr293)"/>
<defs><linearGradient id="gr293" x1="0" y1="0" x2="0" y2="1"><stop offset="0" stop-color="#22241f"/><stop offset="1" stop-color="#000"/></linearGradient></defs>
<g shape-rendering="crispEdges">
<line x1="58.50" y1="293.3" x2="58.50" y2="426.5" stroke="#0000c0" stroke-width="1"/>
<line x1="68.50" y1="293.3" x2="68.50" y2="426.5" stroke="#0000c0" stroke-width="1"/>
<line x1="79.50" y1="293.3" x2="79.50" y2="426.5" stroke="#0000c0" stroke-width="1"/>
<line x1="89.50" y1="293.3" x2="89.50" y2="426.5" stroke="#0000c0" stroke-width="1"/>
<line x1="100.50" y1="293.3" x2="100.50" y2="426.5" stroke="#0000ff" stroke-width="1"/>
<line x1="110.50" y1="293.3" x2="110.50" y2="426.5" stroke="#0000c0" stroke-width="1"/>
<line x1="121.50" y1="293.3" x2="121.50" y2="426.5" stroke="#0000c0" stroke-width="1"/>
<line x1="131.50" y1="293.3" x2="131.50" y2="426.5" stroke="#0000c0" stroke-width="1"/>
<line x1="142.50" y1="293.3" x2="142.50" y2="426.5" stroke="#0000c0" stroke-width="1"/>
<line x1="152.50" y1="293.3" x2="152.50" y2="426.5" stroke="#0000ff" stroke-width="1"/>
<line x1="162.50" y1="293.3" x2="162.50" y2="426.5" stroke="#0000c0" stroke-width="1"/>
<line x1="173.50" y1="293.3" x2="173.50" y2="426.5" stroke="#0000c0" stroke-width="1"/>
<line x1="183.50" y1="293.3" x2="183.50" y2="426.5" stroke="#0000c0" stroke-width="1"/>
<line x1="194.50" y1="293.3" x2="194.50" y2="426.5" stroke="#0000c0" stroke-width="1"/>
<line x1="204.50" y1="293.3" x2="204.50" y2="426.5" stroke="#0000ff" stroke-width="1"/>
<line x1="215.50" y1="293.3" x2="215.50" y2="426.5" stroke="#0000c0" stroke-width="1"/>
<line x1="225.50" y1="293.3" x2="225.50" y2="426.5" stroke="#0000c0" stroke-width="1"/>
<line x1="236.50" y1="293.3" x2="236.50" y2="426.5" stroke="#0000c0" stroke-width="1"/>
<line x1="246.50" y1="293.3" x2="246.50" y2="426.5" stroke="#0000c0" stroke-width="1"/>
<line x1="257.50" y1="293.3" x2="257.50" y2="426.5" stroke="#0000ff" stroke-width="1"/>
<line x1="267.50" y1="293.3" x2="267.50" y2="426.5" stroke="#0000c0" stroke-width="1"/>
<line x1="277.50" y1="293.3" x2="277.50" y2="426.5" stroke="#0000c0" stroke-width="1"/>
<line x1="288.50" y1="293.3" x2="288.50" y2="426.5" stroke="#0000c0" stroke-width="1"/>
<line x1="298.50" y1="293.3" x2="298.50" y2="426.5" stroke="#0000c0" stroke-width="1"/>
<line x1="309.50" y1="293.3" x2="309.50" y2="426.5" stroke="#0000ff" stroke-width="1"/>
<line x1="319.50" y1="293.3" x2="319.50" y2="426.5" stroke="#0000c0" stroke-width="1"/>
<line x1="330.50" y1="293.3" x2="330.50" y2="426.5" stroke="#0000c0" stroke-width="1"/>
<line x1="340.50" y1="293.3" x2="340.50" y2="426.5" stroke="#0000c0" stroke-width="1"/>
<line x1="351.50" y1="293.3" x2="351.50" y2="426.5" stroke="#0000c0" stroke-width="1"/>
<line x1="361.50" y1="293.3" x2="361.50" y2="426.5" stroke="#0000ff" stroke-width="1"/>
<line x1="371.50" y1="293.3" x2="371.50" y2="426.5" stroke="#0000c0" stroke-width="1"/>
<line x1="382.50" y1="293.3" x2="382.50" y2="426.5" stroke="#0000c0" stroke-width="1"/>
<line x1="392.50" y1="293.3" x2="392.50" y2="426.5" stroke="#0000c0" stroke-width="1"/>
<line x1="403.50" y1="293.3" x2="403.50" y2="426.5" stroke="#0000c0" stroke-width="1"/>
<line x1="413.50" y1="293.3" x2="413.50" y2="426.5" stroke="#0000ff" stroke-width="1"/>
<line x1="424.50" y1="293.3" x2="424.50" y2="426.5" stroke="#0000c0" stroke-width="1"/>
<line x1="434.50" y1="293.3" x2="434.50" y2="426.5" stroke="#0000c0" stroke-width="1"/>
<line x1="445.50" y1="293.3" x2="445.50" y2="426.5" stroke="#0000c0" stroke-width="1"/>
<line x1="455.50" y1="293.3" x2="455.50" y2="426.5" stroke="#0000c0" stroke-width="1"/>
<line x1="44.5" y1="293.50" x2="466" y2="293.50" stroke="#0000ff" stroke-width="1"/>
<line x1="46" y1="307.50" x2="466" y2="307.50" stroke="#0000c0" stroke-width="1"/>
<line x1="44.5" y1="320.50" x2="466" y2="320.50" stroke="#0000ff" stroke-width="1"/>
<line x1="46" y1="333.50" x2="466" y2="333.50" stroke="#0000c0" stroke-width="1"/>
<line x1="44.5" y1="347.50" x2="466" y2="347.50" stroke="#0000ff" stroke-width="1"/>
<line x1="46" y1="360.50" x2="466" y2="360.50" stroke="#0000c0" stroke-width="1"/>
<line x1="44.5" y1="373.50" x2="466" y2="373.50" stroke="#0000ff" stroke-width="1"/>
<line x1="46" y1="387.50" x2="466" y2="387.50" stroke="#0000c0" stroke-width="1"/>
<line x1="44.5" y1="400.50" x2="466" y2="400.50" stroke="#0000ff" stroke-width="1"/>
<line x1="46" y1="413.50" x2="466" y2="413.50" stroke="#0000c0" stroke-width="1"/>
<line x1="44.5" y1="426.50" x2="466" y2="426.50" stroke="#0000ff" stroke-width="1"/>
</g>
<g shape-rendering="crispEdges"><rect x="52" y="373" width="1" height="53.5" fill="#22ff00"/>
<rect x="59" y="347" width="1" height="79.5" fill="#22ff00"/>
<rect x="61" y="360" width="1" height="66.5" fill="#22ff00"/>
<rect x="74" y="387" width="1" height="39.5" fill="#22ff00"/>
<rect x="98" y="347" width="1" height="79.5" fill="#22ff00"/>
<rect x="100" y="413" width="1" height="13.5" fill="#22ff00"/>
<rect x="106" y="413" width="1" height="13.5" fill="#22ff00"/>
<rect x="107" y="413" width="2" height="13.5" fill="#22ff00"/>
<rect x="108" y="413" width="2" height="13.5" fill="#22ff00"/>
<rect x="109" y="400" width="1" height="26.5" fill="#22ff00"/>
<rect x="113" y="413" width="1" height="13.5" fill="#22ff00"/>
<rect x="126" y="413" width="1" height="13.5" fill="#22ff00"/>
<rect x="130" y="413" width="1" height="13.5" fill="#22ff00"/>
<rect x="136" y="400" width="1" height="26.5" fill="#22ff00"/>
<rect x="139" y="413" width="1" height="13.5" fill="#22ff00"/>
<rect x="145" y="413" width="1" height="13.5" fill="#22ff00"/>
<rect x="145" y="413" width="2" height="13.5" fill="#22ff00"/>
<rect x="146" y="387" width="1" height="39.5" fill="#22ff00"/>
<rect x="159" y="413" width="1" height="13.5" fill="#22ff00"/>
<rect x="172" y="413" width="1" height="13.5" fill="#22ff00"/>
<rect x="173" y="413" width="1" height="13.5" fill="#22ff00"/>
<rect x="186" y="413" width="1" height="13.5" fill="#22ff00"/>
<rect x="199" y="413" width="1" height="13.5" fill="#22ff00"/>
<rect x="204" y="413" width="2" height="13.5" fill="#22ff00"/>
<rect x="212" y="413" width="1" height="13.5" fill="#22ff00"/>
<rect x="223" y="413" width="2" height="13.5" fill="#22ff00"/>
<rect x="225" y="413" width="1" height="13.5" fill="#22ff00"/>
<rect x="227" y="413" width="1" height="13.5" fill="#22ff00"/>
<rect x="228" y="413" width="2" height="13.5" fill="#22ff00"/>
<rect x="230" y="413" width="1" height="13.5" fill="#22ff00"/>
<rect x="234" y="413" width="1" height="13.5" fill="#22ff00"/>
<rect x="236" y="413" width="1" height="13.5" fill="#22ff00"/>
<rect x="243" y="413" width="1" height="13.5" fill="#22ff00"/>
<rect x="246" y="413" width="8" height="13.5" fill="#22ff00"/>
<rect x="257" y="400" width="17" height="26.5" fill="#22ff00"/>
<rect x="257" y="387" width="1" height="39.5" fill="#22ff00"/>
<rect x="259" y="387" width="1" height="39.5" fill="#22ff00"/>
<rect x="268" y="387" width="1" height="39.5" fill="#22ff00"/>
<rect x="274" y="387" width="3" height="39.5" fill="#22ff00"/>
<rect x="274" y="360" width="1" height="66.5" fill="#22ff00"/>
<rect x="277" y="360" width="5" height="66.5" fill="#22ff00"/>
<rect x="280" y="351" width="8" height="75.5" fill="#22ff00"/>
<rect x="285" y="333" width="1" height="93.5" fill="#22ff00"/>
<rect x="281.5" y="350.6" width="5" height="75.9" fill="#90f000" opacity="0.7"/>
<rect x="288" y="413" width="10" height="13.5" fill="#22ff00"/>
<rect x="289" y="400" width="3" height="26.5" fill="#22ff00"/>
<rect x="294" y="400" width="4" height="26.5" fill="#22ff00"/>
<rect x="291" y="387" width="1" height="39.5" fill="#22ff00"/>
<rect x="295" y="373" width="1" height="53.5" fill="#22ff00"/>
<rect x="292" y="387" width="1" height="39.5" fill="#22ff00"/>
<rect x="298" y="413" width="8" height="13.5" fill="#22ff00"/>
<rect x="307" y="413" width="46" height="13.5" fill="#22ff00"/>
<rect x="354" y="413" width="14" height="13.5" fill="#22ff00"/>
<rect x="307" y="400" width="2" height="26.5" fill="#22ff00"/>
<rect x="310" y="400" width="1" height="26.5" fill="#22ff00"/>
<rect x="316" y="400" width="1" height="26.5" fill="#22ff00"/>
<rect x="322" y="400" width="1" height="26.5" fill="#22ff00"/>
<rect x="328" y="400" width="2" height="26.5" fill="#22ff00"/>
<rect x="332" y="400" width="1" height="26.5" fill="#22ff00"/>
<rect x="335" y="400" width="1" height="26.5" fill="#22ff00"/>
<rect x="337" y="400" width="1" height="26.5" fill="#22ff00"/>
<rect x="343" y="400" width="2" height="26.5" fill="#22ff00"/>
<rect x="351" y="400" width="1" height="26.5" fill="#22ff00"/>
<rect x="354" y="400" width="2" height="26.5" fill="#22ff00"/>
<rect x="357" y="400" width="1" height="26.5" fill="#22ff00"/>
<rect x="331" y="400" width="1" height="26.5" fill="#22ff00"/>
<rect x="332" y="400" width="2" height="26.5" fill="#22ff00"/>
<rect x="334" y="400" width="2" height="26.5" fill="#22ff00"/>
<rect x="337" y="400" width="1" height="26.5" fill="#22ff00"/>
<rect x="344" y="400" width="2" height="26.5" fill="#22ff00"/>
<rect x="350" y="400" width="2" height="26.5" fill="#22ff00"/>
<rect x="355" y="400" width="5" height="26.5" fill="#22ff00"/>
<rect x="362" y="400" width="6" height="26.5" fill="#22ff00"/>
<rect x="346" y="387" width="1" height="39.5" fill="#22ff00"/>
<rect x="349" y="387" width="1" height="39.5" fill="#22ff00"/>
<rect x="311" y="333" width="1" height="93.5" fill="#22ff00"/>
<rect x="345" y="387" width="2" height="39.5" fill="#22ff00"/>
<rect x="349" y="387" width="1" height="39.5" fill="#22ff00"/>
<rect x="367" y="387" width="1" height="39.5" fill="#22ff00"/>
<rect x="369" y="387" width="1" height="39.5" fill="#22ff00"/>
<rect x="365" y="373" width="1" height="53.5" fill="#22ff00"/>
<rect x="373" y="413" width="1" height="13.5" fill="#22ff00"/>
<rect x="375" y="413" width="1" height="13.5" fill="#22ff00"/>
<rect x="380" y="373" width="1" height="53.5" fill="#22ff00"/>
<rect x="391" y="387" width="2" height="39.5" fill="#22ff00"/>
<rect x="394" y="373" width="2" height="53.5" fill="#22ff00"/>
<rect x="401" y="333" width="1" height="93.5" fill="#22ff00"/>
<rect x="403" y="373" width="2" height="53.5" fill="#22ff00"/>
<rect x="402" y="413" width="1" height="13.5" fill="#22ff00"/>
<rect x="405" y="413" width="1" height="13.5" fill="#22ff00"/>
<rect x="406" y="413" width="2" height="13.5" fill="#22ff00"/>
<rect x="410" y="400" width="1" height="26.5" fill="#22ff00"/>
<rect x="411" y="413" width="2" height="13.5" fill="#22ff00"/>
<rect x="414" y="413" width="1" height="13.5" fill="#22ff00"/>
<rect x="419" y="413" width="1" height="13.5" fill="#22ff00"/>
<rect x="422" y="413" width="2" height="13.5" fill="#22ff00"/>
<rect x="429" y="413" width="1" height="13.5" fill="#22ff00"/>
<rect x="432" y="413" width="1" height="13.5" fill="#22ff00"/>
<rect x="434" y="413" width="1" height="13.5" fill="#22ff00"/>
<rect x="437" y="373" width="1" height="53.5" fill="#22ff00"/>
<rect x="439" y="400" width="1" height="26.5" fill="#22ff00"/>
<rect x="440" y="413" width="1" height="13.5" fill="#22ff00"/>
<rect x="442" y="373" width="1" height="53.5" fill="#22ff00"/>
<rect x="443" y="400" width="1" height="26.5" fill="#22ff00"/>
<rect x="444" y="413" width="1" height="13.5" fill="#22ff00"/>
<rect x="450" y="333" width="1" height="93.5" fill="#22ff00"/>
<rect x="452" y="413" width="1" height="13.5" fill="#22ff00"/></g><path d="M48.5 371.0 L49.0 374.5 L49.5 369.3 L50.0 368.4 L50.5 367.3 L51.0 372.3 L51.5 370.3 L52.0 369.0 L52.5 371.6 L53.0 368.5 L53.5 372.0 L54.0 370.4 L54.5 372.2 L55.0 366.9 L55.5 369.7 L56.0 370.2 L56.5 371.9 L57.0 370.6 L57.5 374.5 L58.0 371.3 L58.5 372.7 L59.0 364.3 L59.5 372.8 L60.0 367.2 L60.5 372.9 L61.0 371.4 L61.5 373.9 L62.0 369.9 L62.5 371.3 L63.0 369.9 L63.5 373.0 L64.0 371.5 L64.5 374.1 L65.0 371.2 L65.5 367.2 L66.0 371.0 L66.5 367.5 L67.0 370.4 L67.5 373.4 L68.0 370.6 L68.5 369.6 L69.0 372.3 L69.5 371.1 L70.0 372.7 L70.5 366.0 L71.0 368.8 L71.5 369.2 L72.0 370.9 L72.5 364.6 L73.0 366.8 L73.5 366.5 L74.0 363.1 L74.5 365.2 L75.0 360.9 L75.5 360.3 L76.0 361.6 L76.5 358.8 L77.0 363.4 L77.5 356.5 L78.0 359.5 L78.5 362.2 L79.0 360.4 L79.5 357.5 L80.0 360.1 L80.5 363.8 L81.0 359.9 L81.5 357.3 L82.0 364.7 L82.5 362.5 L83.0 356.5 L83.5 363.1 L84.0 365.6 L84.5 359.5 L85.0 362.2 L85.5 356.3 L86.0 360.6 L86.5 363.6 L87.0 360.5 L87.5 357.8 L88.0 364.7 L88.5 361.2 L89.0 356.5 L89.5 357.2 L90.0 358.1 L90.5 356.8 L91.0 363.2 L91.5 359.8 L92.0 363.0 L92.5 359.6 L93.0 358.4 L93.5 358.7 L94.0 360.1 L94.5 363.7 L95.0 362.5 L95.5 359.9 L96.0 361.1 L96.5 362.6 L97.0 361.6 L97.5 362.2 L98.0 358.8 L98.5 358.7 L99.0 358.0 L99.5 359.9 L100.0 350.6 L100.5 362.9 L101.0 359.1 L101.5 359.6 L102.0 361.3 L102.5 360.7 L103.0 361.8 L103.5 363.2 L104.0 356.5 L104.5 358.8 L105.0 358.4 L105.5 359.7 L106.0 360.4 L106.5 360.7 L107.0 359.7 L107.5 360.6 L108.0 363.4 L108.5 362.6 L109.0 362.1 L109.5 362.1 L110.0 362.8 L110.5 358.6 L111.0 361.4 L111.5 358.0 L112.0 360.2 L112.5 360.8 L113.0 362.1 L113.5 361.0 L114.0 359.2 L114.5 349.0 L115.0 365.4 L115.5 356.0 L116.0 361.0 L116.5 360.2 L117.0 366.2 L117.5 359.1 L118.0 360.6 L118.5 357.1 L119.0 361.4 L119.5 360.9 L120.0 362.2 L120.5 362.8 L121.0 361.6 L121.5 361.2 L122.0 358.0 L122.5 361.1 L123.0 353.1 L123.5 354.4 L124.0 359.7 L124.5 368.1 L125.0 365.6 L125.5 365.0 L126.0 362.1 L126.5 361.2 L127.0 360.3 L127.5 362.8 L128.0 361.2 L128.5 360.3 L129.0 362.2 L129.5 362.6 L130.0 365.1 L130.5 362.8 L131.0 359.6 L131.5 358.2 L132.0 360.1 L132.5 359.2 L133.0 363.4 L133.5 361.8 L134.0 360.9 L134.5 354.8 L135.0 363.2 L135.5 357.4 L136.0 361.1 L136.5 359.1 L137.0 362.6 L137.5 362.7 L138.0 355.2 L138.5 358.8 L139.0 357.8 L139.5 365.3 L140.0 362.7 L140.5 358.4 L141.0 356.2 L141.5 361.0 L142.0 359.9 L142.5 359.2 L143.0 364.5 L143.5 363.7 L144.0 362.6 L144.5 361.4 L145.0 361.4 L145.5 360.9 L146.0 359.9 L146.5 362.3 L147.0 362.2 L147.5 363.3 L148.0 361.6 L148.5 356.5 L149.0 358.7 L149.5 359.8 L150.0 355.5 L150.5 358.7 L151.0 362.2 L151.5 360.2 L152.0 355.1 L152.5 362.1 L153.0 361.7 L153.5 358.8 L154.0 358.7 L154.5 360.9 L155.0 362.6 L155.5 362.1 L156.0 359.1 L156.5 362.4 L157.0 360.3 L157.5 360.4 L158.0 358.9 L158.5 356.8 L159.0 356.1 L159.5 355.6 L160.0 359.4 L160.5 355.3 L161.0 357.7 L161.5 356.6 L162.0 356.7 L162.5 359.8 L163.0 355.2 L163.5 365.0 L164.0 359.1 L164.5 358.5 L165.0 354.1 L165.5 361.7 L166.0 356.3 L166.5 355.8 L167.0 361.7 L167.5 358.1 L168.0 361.0 L168.5 355.5 L169.0 355.7 L169.5 362.6 L170.0 356.0 L170.5 352.2 L171.0 359.8 L171.5 359.4 L172.0 355.6 L172.5 363.6 L173.0 363.0 L173.5 355.2 L174.0 360.5 L174.5 361.1 L175.0 357.6 L175.5 357.2 L176.0 366.1 L176.5 359.3 L177.0 360.3 L177.5 358.9 L178.0 357.1 L178.5 358.5 L179.0 358.7 L179.5 358.6 L180.0 359.6 L180.5 360.2 L181.0 362.6 L181.5 354.3 L182.0 358.0 L182.5 357.7 L183.0 357.2 L183.5 360.1 L184.0 362.5 L184.5 360.8 L185.0 355.7 L185.5 360.8 L186.0 355.5 L186.5 353.1 L187.0 363.3 L187.5 360.0 L188.0 353.9 L188.5 354.9 L189.0 357.3 L189.5 359.5 L190.0 356.1 L190.5 358.1 L191.0 354.6 L191.5 356.1 L192.0 353.7 L192.5 353.2 L193.0 352.9 L193.5 358.0 L194.0 359.8 L194.5 359.3 L195.0 359.2 L195.5 361.4 L196.0 357.1 L196.5 357.9 L197.0 355.8 L197.5 360.4 L198.0 355.3 L198.5 352.8 L199.0 357.7 L199.5 361.7 L200.0 358.6 L200.5 355.1 L201.0 361.6 L201.5 361.9 L202.0 355.6 L202.5 357.8 L203.0 359.8 L203.5 358.1 L204.0 358.8 L204.5 361.5 L205.0 355.6 L205.5 355.3 L206.0 358.9 L206.5 357.5 L207.0 354.0 L207.5 357.5 L208.0 356.2 L208.5 352.8 L209.0 352.6 L209.5 355.4 L210.0 357.0 L210.5 360.7 L211.0 350.4 L211.5 352.4 L212.0 358.6 L212.5 354.9 L213.0 365.2 L213.5 354.1 L214.0 358.4 L214.5 356.0 L215.0 357.2 L215.5 356.8 L216.0 354.8 L216.5 357.6 L217.0 353.8 L217.5 355.9 L218.0 362.1 L218.5 360.8 L219.0 357.7 L219.5 358.2 L220.0 354.9 L220.5 358.6 L221.0 353.8 L221.5 354.5 L222.0 357.5 L222.5 356.3 L223.0 357.9 L223.5 356.8 L224.0 357.5 L224.5 362.3 L225.0 354.0 L225.5 361.8 L226.0 357.4 L226.5 357.7 L227.0 352.4 L227.5 361.5 L228.0 353.3 L228.5 356.3 L229.0 357.3 L229.5 353.8 L230.0 356.5 L230.5 354.4 L231.0 355.8 L231.5 356.7 L232.0 357.0 L232.5 353.6 L233.0 358.3 L233.5 352.2 L234.0 352.6 L234.5 356.8 L235.0 357.7 L235.5 358.0 L236.0 352.5 L236.5 358.1 L237.0 357.2 L237.5 362.8 L238.0 353.9 L238.5 355.9 L239.0 362.5 L239.5 350.2 L240.0 350.0 L240.5 353.4 L241.0 358.1 L241.5 354.3 L242.0 357.9 L242.5 352.5 L243.0 357.9 L243.5 357.9 L244.0 354.2 L244.5 355.7 L245.0 351.6 L245.5 354.3 L246.0 357.7 L246.5 352.4 L247.0 358.2 L247.5 354.5 L248.0 356.2 L248.5 352.7 L249.0 354.3 L249.5 353.7 L250.0 353.8 L250.5 358.6 L251.0 358.2 L251.5 353.8 L252.0 351.5 L252.5 353.5 L253.0 345.6 L253.5 351.4 L254.0 359.4 L254.5 353.6 L255.0 350.6 L255.2 426.5 L255.4 345.2 L255.5 343.4 L256.0 344.8 L256.5 352.4 L257.0 346.7 L257.5 346.6 L258.0 343.7 L258.5 347.1 L259.0 347.2 L259.5 348.1 L260.0 344.6 L260.5 345.9 L261.0 347.1 L261.5 344.1 L262.0 346.9 L262.5 350.8 L263.0 343.9 L263.5 347.6 L264.0 347.1 L264.5 346.0 L265.0 343.0 L265.5 346.8 L266.0 348.9 L266.5 342.1 L267.0 341.8 L267.5 348.0 L268.0 341.9 L268.5 346.7 L269.0 346.0 L269.5 347.2 L270.0 343.9 L270.5 348.5 L271.0 346.3 L271.5 347.5 L272.0 343.7 L272.5 350.8 L273.0 349.7 L273.5 349.3 L274.0 343.0 L274.5 344.9 L275.0 345.8 L275.5 346.8 L276.0 347.3 L276.5 346.8 L277.0 344.9 L277.5 344.7 L278.0 345.2 L278.5 346.0 L279.0 347.8 L279.5 345.8 L280.0 340.7 L280.5 345.6 L281.0 346.3 L281.5 347.2 L282.0 346.3 L282.5 347.3 L283.0 346.1 L283.5 343.6 L284.0 344.6 L284.5 351.4 L285.0 343.7 L285.5 345.1 L286.0 345.4 L286.5 347.5 L287.0 346.2 L287.5 350.8 L288.0 350.4 L288.5 345.5 L289.0 347.8 L289.5 346.5 L290.0 348.6 L290.5 348.6 L291.0 344.7 L291.5 346.0 L292.0 350.5 L292.5 345.7 L293.0 343.5 L293.5 345.1 L294.0 347.4 L294.5 342.0 L295.0 341.3 L295.5 347.8 L296.0 347.8 L296.5 342.8 L297.0 344.3 L297.5 347.1 L298.0 345.5 L298.5 345.3 L299.0 344.5 L299.5 343.3 L300.0 350.0 L300.5 341.3 L301.0 349.4 L301.5 347.4 L302.0 348.7 L302.5 348.2 L303.0 350.9 L303.5 345.1 L304.0 346.1 L304.5 349.2 L305.0 342.7 L305.5 344.5 L306.0 352.0 L306.5 343.9 L307.0 344.9 L307.5 352.4 L308.0 344.8 L308.5 347.1 L309.0 352.4 L309.5 348.8 L310.0 343.4 L310.5 349.5 L311.0 352.8 L311.5 346.1 L312.0 349.1 L312.5 349.0 L313.0 345.8 L313.5 346.7 L314.0 347.5 L314.5 348.1 L315.0 349.2 L315.5 348.8 L316.0 341.1 L316.5 346.0 L317.0 344.2 L317.5 343.1 L318.0 336.7 L318.5 345.4 L319.0 343.0 L319.5 345.7 L320.0 349.3 L320.5 344.1 L321.0 355.3 L321.5 349.7 L322.0 343.6 L322.5 348.8 L323.0 348.0 L323.5 347.3 L324.0 348.9 L324.5 348.1 L325.0 354.2 L325.5 346.6 L326.0 344.8 L326.5 345.2 L327.0 346.0 L327.5 347.5 L328.0 345.8 L328.5 347.8 L329.0 349.1 L329.5 347.4 L330.0 345.4 L330.5 352.6 L331.0 344.5 L331.5 346.6 L332.0 345.2 L332.5 346.8 L333.0 348.8 L333.5 342.7 L334.0 339.6 L334.5 343.3 L335.0 343.9 L335.5 343.3 L336.0 352.5 L336.5 344.2 L337.0 342.1 L337.5 348.3 L338.0 340.8 L338.5 345.2 L339.0 344.6 L339.5 345.9 L340.0 345.8 L340.5 346.6 L341.0 350.3 L341.5 347.5 L342.0 344.2 L342.5 349.2 L343.0 347.3 L343.5 345.9 L344.0 343.2 L344.5 345.9 L345.0 347.2 L345.5 343.0 L346.0 352.3 L346.5 348.1 L347.0 344.9 L347.5 347.3 L348.0 347.7 L348.5 341.3 L349.0 350.3 L349.5 349.1 L350.0 347.3 L350.5 347.7 L351.0 349.7 L351.5 345.5 L352.0 345.8 L352.5 341.0 L353.0 345.5 L353.5 345.1 L354.0 347.7 L354.5 344.8 L355.0 344.1 L355.5 350.4 L356.0 344.7 L356.5 343.5 L357.0 346.6 L357.5 344.6 L358.0 343.0 L358.5 345.0 L359.0 345.3 L359.5 347.7 L360.0 345.9 L360.5 344.2 L361.0 349.9 L361.5 350.7 L362.0 342.2 L362.5 346.3 L363.0 344.4 L363.5 340.1 L364.0 347.6 L364.5 347.8 L365.0 348.9 L365.5 346.0 L366.0 345.4 L366.5 351.3 L367.0 359.1 L367.5 362.4 L368.0 360.3 L368.5 362.5 L369.0 361.6 L369.5 363.7 L370.0 366.8 L370.5 359.6 L371.0 361.3 L371.5 369.4 L372.0 359.5 L372.5 357.0 L373.0 367.1 L373.5 362.1 L374.0 367.2 L374.5 364.6 L375.0 361.8 L375.5 364.1 L376.0 362.5 L376.5 364.4 L377.0 362.5 L377.5 364.9 L378.0 363.1 L378.5 360.3 L379.0 363.6 L379.5 365.3 L380.0 367.6 L380.5 365.3 L381.0 362.4 L381.5 362.2 L382.0 363.4 L382.5 361.1 L383.0 362.5 L383.5 366.0 L384.0 363.6 L384.5 368.8 L385.0 364.0 L385.5 361.2 L386.0 362.1 L386.5 364.5 L387.0 363.1 L387.5 364.2 L388.0 358.9 L388.5 366.7 L389.0 365.8 L389.5 351.7 L390.0 365.3 L390.5 360.7 L391.0 362.3 L391.5 360.5 L392.0 362.6 L392.5 362.5 L393.0 362.8 L393.5 360.8 L394.0 363.4 L394.5 363.7 L395.0 364.7 L395.5 361.0 L396.0 360.5 L396.5 364.5 L397.0 363.9 L397.5 364.4 L398.0 365.9 L398.5 366.0 L399.0 362.3 L399.5 361.0 L400.0 363.8 L400.5 363.6 L401.0 365.0 L401.5 360.2 L402.0 362.8 L402.5 361.8 L403.0 366.2 L403.5 365.2 L404.0 361.2 L404.5 360.9 L405.0 362.1 L405.5 362.5 L406.0 356.4 L406.5 362.4 L407.0 358.4 L407.5 360.5 L408.0 364.5 L408.5 360.2 L409.0 363.8 L409.5 361.3 L410.0 365.2 L410.5 361.8 L411.0 358.4 L411.5 359.7 L412.0 364.6 L412.5 361.2 L413.0 366.8 L413.5 363.4 L414.0 356.2 L414.5 365.0 L415.0 365.6 L415.5 358.4 L416.0 367.7 L416.5 363.3 L417.0 360.4 L417.5 362.5 L418.0 364.6 L418.5 362.8 L419.0 366.3 L419.5 359.4 L420.0 360.3 L420.5 365.1 L421.0 367.6 L421.5 361.0 L422.0 362.9 L422.5 361.3 L423.0 360.6 L423.5 360.8 L424.0 362.4 L424.5 356.5 L425.0 362.0 L425.5 363.7 L426.0 361.0 L426.5 358.0 L427.0 361.6 L427.5 362.7 L428.0 364.5 L428.5 362.5 L429.0 356.2 L429.5 359.6 L430.0 366.3 L430.5 358.9 L431.0 364.7 L431.5 365.1 L432.0 361.4 L432.5 360.7 L433.0 367.7 L433.5 368.7 L434.0 363.9 L434.5 361.3 L435.0 362.1 L435.5 363.3 L436.0 366.4 L436.5 364.8 L437.0 365.6 L437.5 360.4 L438.0 360.9 L438.5 363.7 L439.0 366.2 L439.5 369.7 L440.0 368.1 L440.5 368.7 L441.0 371.1 L441.5 369.2 L442.0 369.2 L442.5 371.9 L443.0 367.8 L443.5 369.9 L444.0 369.9 L444.5 363.9 L445.0 369.2 L445.5 369.1 L446.0 368.4 L446.5 372.3 L447.0 370.7 L447.5 367.9 L448.0 368.7 L448.5 369.8 L449.0 370.4 L449.5 364.2 L450.0 368.3 L450.5 369.4 L451.0 372.4 L451.5 370.3 L452.0 371.7 L452.5 368.4 L453.0 369.8 L453.5 371.7 L454.0 371.2 L454.5 368.7" fill="none" stroke="#ff00ff" stroke-width="1.6" stroke-linejoin="round"/>
<line x1="44.5" y1="426.5" x2="466" y2="426.5" stroke="#0000ff" stroke-width="1" shape-rendering="crispEdges"/>
<line x1="456.5" y1="293.3" x2="456.5" y2="426.5" stroke="#ffffff" stroke-width="1" shape-rendering="crispEdges"/>
</svg>
<span class="t" style="left:21.47px;top:122.00px;font-size:12px;color:#000;transform:scaleX(0.8587);transform-origin:100% 0">200</span>
<span class="t" style="left:21.47px;top:149.00px;font-size:12px;color:#000;transform:scaleX(0.8587);transform-origin:100% 0">160</span>
<span class="t" style="left:21.47px;top:175.00px;font-size:12px;color:#000;transform:scaleX(0.8587);transform-origin:100% 0">120</span>
<span class="t" style="left:28.14px;top:202.00px;font-size:12px;color:#000;transform:scaleX(0.8458);transform-origin:100% 0">80</span>
<span class="t" style="left:28.14px;top:229.00px;font-size:12px;color:#000;transform:scaleX(0.8458);transform-origin:100% 0">40</span>
<span class="t" style="left:471.00px;top:133.00px;font-size:12px;color:#000;transform:scaleX(0.8234);transform-origin:0 0">24</span>
<span class="t" style="left:471.00px;top:154.00px;font-size:12px;color:#000;transform:scaleX(0.8234);transform-origin:0 0">20</span>
<span class="t" style="left:471.00px;top:174.00px;font-size:12px;color:#000;transform:scaleX(0.8234);transform-origin:0 0">16</span>
<span class="t" style="left:471.00px;top:194.00px;font-size:12px;color:#000;transform:scaleX(0.8234);transform-origin:0 0">12</span>
<span class="t" style="left:471.00px;top:215.00px;font-size:12px;color:#000;transform:scaleX(0.7626);transform-origin:0 0">8</span>
<span class="t" style="left:471.00px;top:235.00px;font-size:12px;color:#000;transform:scaleX(0.7626);transform-origin:0 0">4</span>
<span class="t" style="left:28.14px;top:284.00px;font-size:12px;color:#000;transform:scaleX(0.8234);transform-origin:100% 0">10</span>
<span class="t" style="left:34.81px;top:311.00px;font-size:12px;color:#000;transform:scaleX(0.7626);transform-origin:100% 0">8</span>
<span class="t" style="left:34.81px;top:337.00px;font-size:12px;color:#000;transform:scaleX(0.7626);transform-origin:100% 0">6</span>
<span class="t" style="left:34.81px;top:364.00px;font-size:12px;color:#000;transform:scaleX(0.7626);transform-origin:100% 0">4</span>
<span class="t" style="left:34.81px;top:391.00px;font-size:12px;color:#000;transform:scaleX(0.7626);transform-origin:100% 0">2</span>
<span class="t" style="left:471.00px;top:284.00px;font-size:12px;color:#000;transform:scaleX(0.8234);transform-origin:0 0">20</span>
<span class="t" style="left:471.00px;top:311.00px;font-size:12px;color:#000;transform:scaleX(0.8234);transform-origin:0 0">16</span>
<span class="t" style="left:471.00px;top:337.00px;font-size:12px;color:#000;transform:scaleX(0.8234);transform-origin:0 0">12</span>
<span class="t" style="left:471.00px;top:364.00px;font-size:12px;color:#000;transform:scaleX(0.7626);transform-origin:0 0">8</span>
<span class="t" style="left:471.00px;top:391.00px;font-size:12px;color:#000;transform:scaleX(0.7626);transform-origin:0 0">4</span>
<span class="t" style="left:41.66px;top:266.00px;font-size:12px;color:#000;transform:scaleX(0.8569);transform-origin:50% 0">0.0</span>
<span class="t" style="left:41.66px;top:428.00px;font-size:12px;color:#000;transform:scaleX(0.8569);transform-origin:50% 0">0.0</span>
<span class="t" style="left:93.91px;top:266.00px;font-size:12px;color:#000;transform:scaleX(0.8569);transform-origin:50% 0">1.0</span>
<span class="t" style="left:93.91px;top:428.00px;font-size:12px;color:#000;transform:scaleX(0.8569);transform-origin:50% 0">1.0</span>
<span class="t" style="left:146.16px;top:266.00px;font-size:12px;color:#000;transform:scaleX(0.8569);transform-origin:50% 0">2.0</span>
<span class="t" style="left:146.16px;top:428.00px;font-size:12px;color:#000;transform:scaleX(0.8569);transform-origin:50% 0">2.0</span>
<span class="t" style="left:198.41px;top:266.00px;font-size:12px;color:#000;transform:scaleX(0.8569);transform-origin:50% 0">3.0</span>
<span class="t" style="left:198.41px;top:428.00px;font-size:12px;color:#000;transform:scaleX(0.8569);transform-origin:50% 0">3.0</span>
<span class="t" style="left:250.66px;top:266.00px;font-size:12px;color:#000;transform:scaleX(0.8569);transform-origin:50% 0">4.0</span>
<span class="t" style="left:250.66px;top:428.00px;font-size:12px;color:#000;transform:scaleX(0.8569);transform-origin:50% 0">4.0</span>
<span class="t" style="left:302.91px;top:266.00px;font-size:12px;color:#000;transform:scaleX(0.8569);transform-origin:50% 0">5.0</span>
<span class="t" style="left:302.91px;top:428.00px;font-size:12px;color:#000;transform:scaleX(0.8569);transform-origin:50% 0">5.0</span>
<span class="t" style="left:355.16px;top:266.00px;font-size:12px;color:#000;transform:scaleX(0.8569);transform-origin:50% 0">6.0</span>
<span class="t" style="left:355.16px;top:428.00px;font-size:12px;color:#000;transform:scaleX(0.8569);transform-origin:50% 0">6.0</span>
<span class="t" style="left:407.41px;top:266.00px;font-size:12px;color:#000;transform:scaleX(0.8569);transform-origin:50% 0">7.0</span>
<span class="t" style="left:407.41px;top:428.00px;font-size:12px;color:#000;transform:scaleX(0.8569);transform-origin:50% 0">7.0</span>
<span class="t" style="left:459.66px;top:266.00px;font-size:12px;color:#000;transform:scaleX(0.8569);transform-origin:50% 0">8.0</span>
<span class="t" style="left:459.66px;top:428.00px;font-size:12px;color:#000;transform:scaleX(0.8569);transform-origin:50% 0">8.0</span>
<div style="left:14px;top:457px;width:147px;height:57px;box-shadow:inset 1px 1px 0 #808080, inset -1px -1px 0 #fff, inset 2px 2px 0 #fff, inset -2px -2px 0 #808080;"></div>
<div style="left:22px;top:451px;width:54px;height:13px;background:#d4d0c8"></div>
<div style="left:24px;top:453px;width:9px;height:9px;background:#00ffff;border:1px solid #000;box-sizing:border-box;"></div>
<span class="t" style="left:36.00px;top:450.00px;font-size:12px;color:#000;transform:scaleX(0.8238);transform-origin:0 0">PI Errors</span>
<span class="t" style="left:21.80px;top:466.00px;font-size:12px;color:#000;transform:scaleX(0.8784);transform-origin:0 0">Average:</span>
<span class="t" style="left:21.80px;top:481.00px;font-size:12px;color:#000;transform:scaleX(0.8312);transform-origin:0 0">Maximum:</span>
<span class="t" style="left:21.80px;top:496.00px;font-size:12px;color:#000;transform:scaleX(0.9063);transform-origin:0 0">Total:</span>
<span class="t" style="left:120.47px;top:466.00px;font-size:12px;color:#000080;transform:scaleX(0.8991);transform-origin:100% 0">27.13</span>
<span class="t" style="left:131.36px;top:481.00px;font-size:12px;color:#000080;transform:scaleX(0.9143);transform-origin:100% 0">115</span>
<span class="t" style="left:110.45px;top:496.00px;font-size:12px;color:#000080;transform:scaleX(0.9114);transform-origin:100% 0">867996</span>
<div style="left:172px;top:457px;width:146px;height:57px;box-shadow:inset 1px 1px 0 #808080, inset -1px -1px 0 #fff, inset 2px 2px 0 #fff, inset -2px -2px 0 #808080;"></div>
<div style="left:180px;top:451px;width:63px;height:13px;background:#d4d0c8"></div>
<div style="left:182px;top:453px;width:9px;height:9px;background:#ffff00;border:1px solid #000;box-sizing:border-box;"></div>
<span class="t" style="left:193.50px;top:450.00px;font-size:12px;color:#000;transform:scaleX(0.8455);transform-origin:0 0">PI Failures</span>
<span class="t" style="left:181.00px;top:466.00px;font-size:12px;color:#000;transform:scaleX(0.8784);transform-origin:0 0">Average:</span>
<span class="t" style="left:181.00px;top:481.00px;font-size:12px;color:#000;transform:scaleX(0.8312);transform-origin:0 0">Maximum:</span>
<span class="t" style="left:181.00px;top:496.00px;font-size:12px;color:#000;transform:scaleX(0.9063);transform-origin:0 0">Total:</span>
<span class="t" style="left:286.64px;top:466.00px;font-size:12px;color:#000080;transform:scaleX(0.9204);transform-origin:100% 0">0.02</span>
<span class="t" style="left:303.31px;top:481.00px;font-size:12px;color:#000080;transform:scaleX(0.8224);transform-origin:100% 0">7</span>
<span class="t" style="left:283.30px;top:496.00px;font-size:12px;color:#000080;transform:scaleX(0.8988);transform-origin:100% 0">4449</span>
<div style="left:331px;top:457px;width:147px;height:44px;box-shadow:inset 1px 1px 0 #808080, inset -1px -1px 0 #fff, inset 2px 2px 0 #fff, inset -2px -2px 0 #808080;"></div>
<div style="left:339px;top:451px;width:36px;height:13px;background:#d4d0c8"></div>
<div style="left:341px;top:453px;width:9px;height:9px;background:#ff00ff;border:1px solid #000;box-sizing:border-box;"></div>
<span class="t" style="left:352.00px;top:450.00px;font-size:12px;color:#000;transform:scaleX(0.8456);transform-origin:0 0">Jitter</span>
<span class="t" style="left:340.30px;top:466.00px;font-size:12px;color:#000;transform:scaleX(0.8784);transform-origin:0 0">Average:</span>
<span class="t" style="left:340.30px;top:481.00px;font-size:12px;color:#000;transform:scaleX(0.8312);transform-origin:0 0">Maximum:</span>
<span class="t" style="left:431.14px;top:466.00px;font-size:12px;color:#000080;transform:scaleX(0.8565);transform-origin:100% 0">9.91 %</span>
<span class="t" style="left:431.14px;top:481.00px;font-size:12px;color:#000080;transform:scaleX(0.8833);transform-origin:100% 0">13.5 %</span>
<span class="t" style="left:340.30px;top:500.00px;font-size:12px;color:#000;transform:scaleX(0.8532);transform-origin:0 0">PO failures:</span>
<span class="t" style="left:461.81px;top:500.00px;font-size:12px;color:#000080;transform:scaleX(0.8673);transform-origin:100% 0">0</span>
<div style="left:491px;top:125px;width:139px;height:82px;box-shadow:inset 1px 1px 0 #808080, inset -1px -1px 0 #fff, inset 2px 2px 0 #fff, inset -2px -2px 0 #808080;"></div>
<div style="left:498px;top:119px;width:45px;height:13px;background:#d4d0c8"></div>
<span class="t" style="left:500.40px;top:119.00px;font-size:12px;color:#000;transform:scaleX(0.8801);transform-origin:0 0">Disc info</span>
<span class="t" style="left:500.00px;top:132.00px;font-size:12px;color:#000;transform:scaleX(0.8651);transform-origin:0 0">Type:</span>
<span class="t" style="left:545.40px;top:132.00px;font-size:12px;color:#000080;transform:scaleX(0.8823);transform-origin:0 0">DVD-R DL</span>
<span class="t" style="left:500.00px;top:150.00px;font-size:12px;color:#000;transform:scaleX(0.8473);transform-origin:0 0">ID:</span>
<span class="t" style="left:545.40px;top:150.00px;font-size:12px;color:#000080;transform:scaleX(0.9023);transform-origin:0 0">MKM 03RD30</span>
<span class="t" style="left:500.00px;top:167.00px;font-size:12px;color:#000;transform:scaleX(0.8715);transform-origin:0 0">Date:</span>
<span class="t" style="left:545.40px;top:167.00px;font-size:12px;color:#000080;transform:scaleX(0.8992);transform-origin:0 0">3 Nov 2011</span>
<span class="t" style="left:500.00px;top:185.00px;font-size:12px;color:#000;transform:scaleX(0.8562);transform-origin:0 0">Label:</span>
<span class="t" style="left:545.40px;top:185.00px;font-size:12px;color:#000080;transform:scaleX(0.8841);transform-origin:0 0">CDRLabs</span>
<div style="left:491px;top:216px;width:139px;height:202px;box-shadow:inset 1px 1px 0 #808080, inset -1px -1px 0 #fff, inset 2px 2px 0 #fff, inset -2px -2px 0 #808080;"></div>
<div style="left:498px;top:210px;width:42px;height:13px;background:#d4d0c8"></div>
<span class="t" style="left:500.40px;top:209.00px;font-size:12px;color:#000;transform:scaleX(0.8649);transform-origin:0 0">Settings</span>
<div style="left:500px;top:225px;width:82px;height:21px;background:#fff;box-shadow:inset 1px 1px 0 #808080, inset -1px -1px 0 #fff, inset 2px 2px 0 #404040, inset -2px -2px 0 #d4d0c8;"></div>
<span class="t" style="left:505.00px;top:228.00px;font-size:12px;color:#000;transform:scaleX(0.8881);transform-origin:0 0">8 X</span>
<div style="left:566px;top:227px;width:14px;height:17px;background:#d4d0c8;box-shadow:inset 1px 1px 0 #d4d0c8, inset -1px -1px 0 #404040, inset 2px 2px 0 #fff, inset -2px -2px 0 #808080;"><svg style="left:3px;top:6px" width="7" height="4" viewBox="0 0 7 4" shape-rendering="crispEdges"><path d="M0 0h7l-3.5 4z" fill="#000"/></svg></div>
<div style="left:592px;top:224px;width:23px;height:23px;background:#d4d0c8;box-shadow:inset 1px 1px 0 #fff, inset -1px -1px 0 #404040, inset 2px 2px 0 #d4d0c8, inset -2px -2px 0 #808080;"><svg style="left:4px;top:3px" width="14" height="16" viewBox="0 0 14 16"><rect x="0.5" y="0.5" width="13" height="15" fill="#fff" stroke="#000" shape-rendering="crispEdges"/>
<path d="M3.3 7.8V5.8Q3.3 4.4 4.7 4.4H7" fill="none" stroke="#008000" stroke-width="1.3"/><path d="M6.3 1.9l2.9 2.5l-2.9 2.5z" fill="#008000"/>
<path d="M10.7 8.2v2Q10.7 11.6 9.3 11.6H7" fill="none" stroke="#008000" stroke-width="1.3"/><path d="M7.7 9.1l-2.9 2.5l2.9 2.5z" fill="#008000"/></svg></div>
<span class="t" style="left:502.40px;top:255.00px;font-size:12px;color:#000;transform:scaleX(0.8366);transform-origin:0 0">Start:</span>
<div style="left:554px;top:251px;width:60px;height:19px;background:#fff;box-shadow:inset 1px 1px 0 #808080, inset -1px -1px 0 #fff, inset 2px 2px 0 #404040, inset -2px -2px 0 #d4d0c8;"></div>
<span class="t" style="left:557.50px;top:253.00px;font-size:12px;color:#000;transform:scaleX(0.8744);transform-origin:0 0">0000 MB</span>
<span class="t" style="left:502.40px;top:278.00px;font-size:12px;color:#000;transform:scaleX(0.8506);transform-origin:0 0">End:</span>
<div style="left:554px;top:274px;width:60px;height:19px;background:#fff;box-shadow:inset 1px 1px 0 #808080, inset -1px -1px 0 #fff, inset 2px 2px 0 #404040, inset -2px -2px 0 #d4d0c8;"></div>
<span class="t" style="left:557.50px;top:276.00px;font-size:12px;color:#000;transform:scaleX(0.8744);transform-origin:0 0">8000 MB</span>
<div style="left:502px;top:296px;width:13px;height:13px;background:#fff;box-shadow:inset 1px 1px 0 #808080, inset -1px -1px 0 #fff, inset 2px 2px 0 #404040, inset -2px -2px 0 #d4d0c8;"></div>
<span class="t" style="left:520.30px;top:295.00px;font-size:12px;color:#000;transform:scaleX(0.9013);transform-origin:0 0">Quick scan</span>
<div style="left:502px;top:314px;width:13px;height:13px;background:#fff;box-shadow:inset 1px 1px 0 #808080, inset -1px -1px 0 #fff, inset 2px 2px 0 #404040, inset -2px -2px 0 #d4d0c8;"><svg style="left:3px;top:3px" width="7" height="7" viewBox="0 0 7 7"><path d="M0 2v3l2 2l5-5v-3l-5 5z" fill="#000"/></svg></div>
<span class="t" style="left:520.30px;top:313.00px;font-size:12px;color:#000;transform:scaleX(0.8911);transform-origin:0 0">Show C1/PIE</span>
<div style="left:502px;top:330px;width:13px;height:13px;background:#fff;box-shadow:inset 1px 1px 0 #808080, inset -1px -1px 0 #fff, inset 2px 2px 0 #404040, inset -2px -2px 0 #d4d0c8;"><svg style="left:3px;top:3px" width="7" height="7" viewBox="0 0 7 7"><path d="M0 2v3l2 2l5-5v-3l-5 5z" fill="#000"/></svg></div>
<span class="t" style="left:520.30px;top:329.00px;font-size:12px;color:#000;transform:scaleX(0.8995);transform-origin:0 0">Show C2/PIF</span>
<div style="left:502px;top:345px;width:13px;height:13px;background:#fff;box-shadow:inset 1px 1px 0 #808080, inset -1px -1px 0 #fff, inset 2px 2px 0 #404040, inset -2px -2px 0 #d4d0c8;"><svg style="left:3px;top:3px" width="7" height="7" viewBox="0 0 7 7"><path d="M0 2v3l2 2l5-5v-3l-5 5z" fill="#000"/></svg></div>
<span class="t" style="left:520.30px;top:344.00px;font-size:12px;color:#000;transform:scaleX(0.8692);transform-origin:0 0">Show jitter</span>
<div style="left:502px;top:361px;width:13px;height:13px;background:#fff;box-shadow:inset 1px 1px 0 #808080, inset -1px -1px 0 #fff, inset 2px 2px 0 #404040, inset -2px -2px 0 #d4d0c8;"><svg style="left:3px;top:3px" width="7" height="7" viewBox="0 0 7 7"><path d="M0 2v3l2 2l5-5v-3l-5 5z" fill="#000"/></svg></div>
<span class="t" style="left:520.30px;top:360.00px;font-size:12px;color:#000;transform:scaleX(0.8854);transform-origin:0 0">Show read speed</span>
<div style="left:502px;top:377px;width:13px;height:13px;background:#d4d0c8;box-shadow:inset 1px 1px 0 #808080, inset -1px -1px 0 #fff, inset 2px 2px 0 #404040, inset -2px -2px 0 #d4d0c8;"><svg style="left:3px;top:3px" width="7" height="7" viewBox="0 0 7 7"><path d="M0 2v3l2 2l5-5v-3l-5 5z" fill="#808080"/></svg></div>
<span class="t" style="left:521.30px;top:377.00px;font-size:12px;color:#fff;transform:scaleX(0.8868);transform-origin:0 0">Show write speed</span>
<span class="t" style="left:520.30px;top:376.00px;font-size:12px;color:#808080;transform:scaleX(0.8868);transform-origin:0 0">Show write speed</span>
<div style="left:527px;top:393px;width:98px;height:23px;background:#d4d0c8;box-shadow:inset 1px 1px 0 #fff, inset -1px -1px 0 #404040, inset 2px 2px 0 #d4d0c8, inset -2px -2px 0 #808080;"></div>
<span class="t" style="left:549.01px;top:396.00px;font-size:12px;color:#000;transform:scaleX(0.9368);transform-origin:50% 0">Advanced</span>
<div style="left:491px;top:425px;width:139px;height:26px;box-shadow:inset 1px 1px 0 #808080, inset -1px -1px 0 #fff, inset 2px 2px 0 #fff, inset -2px -2px 0 #808080;"></div>
<span class="t" style="left:502.40px;top:431.00px;font-size:12px;color:#000;transform:scaleX(0.8533);transform-origin:0 0">Quality score:</span>
<span class="t" style="left:607.24px;top:431.00px;font-size:12px;color:#000080;transform:scaleX(0.8982);transform-origin:100% 0">96</span>
<div style="left:491px;top:457px;width:139px;height:57px;box-shadow:inset 1px 1px 0 #808080, inset -1px -1px 0 #fff, inset 2px 2px 0 #fff, inset -2px -2px 0 #808080;"></div>
<span class="t" style="left:502.40px;top:465.00px;font-size:12px;color:#000;transform:scaleX(0.8372);transform-origin:0 0">Progress:</span>
<span class="t" style="left:502.40px;top:480.00px;font-size:12px;color:#000;transform:scaleX(0.8473);transform-origin:0 0">Position:</span>
<span class="t" style="left:502.40px;top:496.00px;font-size:12px;color:#000;transform:scaleX(0.8674);transform-origin:0 0">Speed:</span>
<span class="t" style="left:587.27px;top:465.00px;font-size:12px;color:#000080;transform:scaleX(0.8522);transform-origin:100% 0">100 %</span>
<span class="t" style="left:573.27px;top:480.00px;font-size:12px;color:#000080;transform:scaleX(0.8744);transform-origin:100% 0">7999 MB</span>
<span class="t" style="left:586.60px;top:496.00px;font-size:12px;color:#000080;transform:scaleX(0.8933);transform-origin:100% 0">3.63 X</span>
</body></html>
